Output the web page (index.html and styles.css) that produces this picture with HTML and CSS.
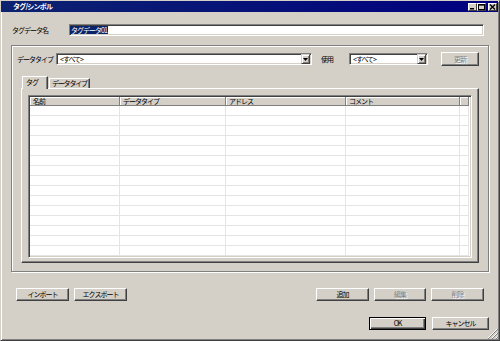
FILE: index.html
```html
<!DOCTYPE html>
<html lang="ja">
<head>
    <meta charset="UTF-8">
    <title>タグ/シンボル</title>
    <link rel="stylesheet" href="styles.css">
</head>
<body>
    <div class="window">
        <div class="titlebar">
            <span class="title">タグ/シンボル</span>
            <div class="caption-buttons">
                <span class="cap-btn">
                    <svg width="7" height="6" viewBox="0 0 7 6"><rect x="1" y="4" width="4" height="1.5" fill="#000"/></svg>
                </span>
                <span class="cap-btn">
                    <svg width="7" height="6" viewBox="0 0 7 6"><rect x="0.5" y="0.5" width="6" height="5" fill="none" stroke="#000"/><rect x="0" y="0" width="7" height="1.6" fill="#000"/></svg>
                </span>
                <span class="cap-btn close">
                    <svg width="7" height="6" viewBox="0 0 7 6"><path d="M1 0.5 L6 5.5 M6 0.5 L1 5.5" stroke="#000" stroke-width="1.4"/></svg>
                </span>
            </div>
        </div>

        <div class="content">
            <div class="name-row">
                <label class="name-label">タグデータ名</label>
                <div class="textbox"><span class="selected">タグデータ01</span></div>
            </div>

            <div class="group">
                <div class="filter-row">
                    <label class="type-label">データタイプ</label>
                    <div class="combo combo-wide">
                        <span class="combo-text">&lt;すべて&gt;</span>
                        <span class="drop"><svg width="5" height="3" viewBox="0 0 5 3"><path d="M0 0 H5 L2.5 3 Z" fill="#000"/></svg></span>
                    </div>
                    <label class="use-label">使用</label>
                    <div class="combo combo-narrow">
                        <span class="combo-text">&lt;すべて&gt;</span>
                        <span class="drop"><svg width="5" height="3" viewBox="0 0 5 3"><path d="M0 0 H5 L2.5 3 Z" fill="#000"/></svg></span>
                    </div>
                    <button class="btn btn-update" disabled>更新</button>
                </div>

                <div class="tabs">
                    <span class="tab active">タグ</span>
                    <span class="tab">データタイプ</span>
                </div>

                <div class="tab-panel">
                    <div class="listview">
                        <table>
                            <colgroup>
                                <col style="width: 90px">
                                <col style="width: 106px">
                                <col style="width: 120px">
                                <col style="width: 114px">
                                <col style="width: 9px">
                            </colgroup>
                            <thead>
                                <tr><th>名前</th><th>データタイプ</th><th>アドレス</th><th>コメント</th><th></th></tr>
                            </thead>
                            <tbody>
                                <tr><td></td><td></td><td></td><td></td><td></td></tr>
                                <tr><td></td><td></td><td></td><td></td><td></td></tr>
                                <tr><td></td><td></td><td></td><td></td><td></td></tr>
                                <tr><td></td><td></td><td></td><td></td><td></td></tr>
                                <tr><td></td><td></td><td></td><td></td><td></td></tr>
                                <tr><td></td><td></td><td></td><td></td><td></td></tr>
                                <tr><td></td><td></td><td></td><td></td><td></td></tr>
                                <tr><td></td><td></td><td></td><td></td><td></td></tr>
                                <tr><td></td><td></td><td></td><td></td><td></td></tr>
                                <tr><td></td><td></td><td></td><td></td><td></td></tr>
                                <tr><td></td><td></td><td></td><td></td><td></td></tr>
                                <tr><td></td><td></td><td></td><td></td><td></td></tr>
                                <tr><td></td><td></td><td></td><td></td><td></td></tr>
                                <tr><td></td><td></td><td></td><td></td><td></td></tr>
                                <tr><td></td><td></td><td></td><td></td><td></td></tr>
                            </tbody>
                        </table>
                    </div>
                </div>
            </div>

            <div class="action-row">
                <button class="btn">インポート</button>
                <button class="btn">エクスポート</button>
                <button class="btn btn-add">追加</button>
                <button class="btn btn-edit" disabled>編集</button>
                <button class="btn" disabled>削除</button>
            </div>

            <div class="dialog-row">
                <button class="btn btn-default">OK</button>
                <button class="btn">キャンセル</button>
            </div>
        </div>

        <svg class="grip" width="11" height="11" viewBox="0 0 11 11">
            <path d="M10 1 L1 10 M10 5 L5 10 M10 9 L9 10" stroke="#fff" stroke-width="1"/>
            <path d="M11 1 L1 11 M11 5 L5 11 M11 9 L9 11" stroke="#808080" stroke-width="1"/>
        </svg>
    </div>
</body>
</html>
```

FILE: styles.css
```css
* {
    box-sizing: border-box;
}
body {
    margin: 0;
    background: #d4d0c8;
    font-family: "Noto Sans CJK JP", "Noto Sans", sans-serif;
    font-size: 7px;
    line-height: 9px;
    letter-spacing: -1px;
    color: #000;
    white-space: nowrap;
}
.window {
    position: relative;
    width: 500px;
    height: 341px;
    background: #d4d0c8;
    border: 1px solid;
    border-color: #d4d0c8 #404040 #404040 #d4d0c8;
    box-shadow: inset 1px 1px #fff, inset -1px -1px #808080;
    display: flex;
    flex-direction: column;
}
.titlebar {
    height: 11px;
    margin-right: 1px;
    padding: 0 1px 0 12px;
    background: linear-gradient(to right, #0c2270, #000080);
    display: flex;
    align-items: center;
}
.title {
    color: #fff;
    font-weight: bold;
    letter-spacing: -0.8px;
}
.caption-buttons {
    margin-left: auto;
    display: flex;
}
.cap-btn {
    width: 9px;
    height: 8px;
    background: #d4d0c8;
    border: 1px solid;
    border-color: #fff #404040 #404040 #fff;
    display: flex;
    align-items: center;
    justify-content: center;
}
.cap-btn svg {
    display: block;
}
.cap-btn.close {
    margin-left: 2px;
}

.content {
    flex: 1;
    padding: 12px 10px 0 10px;
    display: flex;
    flex-direction: column;
}

/* sunken edit fields */
.textbox, .combo, .listview {
    background: #fff;
    border: 1px solid;
    border-color: #808080 #fff #fff #808080;
    box-shadow: inset 1px 1px #404040, inset -1px -1px #d4d0c8;
}

.name-row {
    height: 12px;
    display: flex;
    align-items: center;
}
.name-label {
    width: 58px;
    padding-left: 1px;
}
.textbox {
    flex: 1;
    height: 12px;
    margin-right: 5px;
    padding: 1px 0 1px 0;
    display: flex;
    align-items: center;
}
.selected {
    background: #0a246a;
    color: #fff;
    padding: 0 1px 0 1px;
    line-height: 8px;
}

.group {
    margin-top: 9px;
    height: 227px;
    border: 1px solid #808080;
    box-shadow: inset 1px 1px #fff, 1px 1px #fff;
    padding: 6px 9px 8px 5px;
}
.filter-row {
    height: 14px;
    display: flex;
    align-items: center;
}
.type-label {
    width: 39px;
}
.combo {
    height: 12px;
    padding: 1px;
    display: flex;
    align-items: center;
}
.combo-wide {
    width: 256px;
}
.combo-narrow {
    width: 79px;
}
.combo-text {
    flex: 1;
    padding-left: 2px;
}
.drop {
    width: 9px;
    height: 10px;
    background: #d4d0c8;
    border: 1px solid;
    border-color: #d4d0c8 #404040 #404040 #d4d0c8;
    box-shadow: inset 1px 1px #fff, inset -1px -1px #808080;
    display: flex;
    align-items: center;
    justify-content: center;
}
.drop svg {
    display: block;
}
.use-label {
    width: 28px;
    margin-left: 9px;
}

.btn {
    font: inherit;
    letter-spacing: inherit;
    color: #000;
    height: 13px;
    padding: 0;
    background: #d4d0c8;
    border: 1px solid;
    border-color: #fff #404040 #404040 #fff;
    box-shadow: inset -1px -1px #808080;
}
.btn:disabled {
    color: #808080;
    text-shadow: 1px 1px #fff;
}
.btn-update {
    width: 38px;
    height: 14px;
    margin-left: auto;
}

.tabs {
    height: 12px;
    margin: 10px 0 0 4px;
    padding-left: 1px;
    display: flex;
    align-items: flex-end;
    position: relative;
    z-index: 1;
}
.tab {
    height: 10px;
    padding-left: 2px;
    background: #d4d0c8;
    border: 1px solid;
    border-bottom: none;
    border-color: #fff #404040 #404040 #fff;
    box-shadow: inset -1px 0 #808080;
    line-height: 8px;
}
.tab.active {
    width: 26px;
    height: 13px;
    margin-bottom: -1px;
    padding-left: 3px;
    line-height: 10px;
}
.tab:not(.active) {
    width: 41px;
    margin-left: 1px;
    letter-spacing: -1.2px;
}

.tab-panel {
    height: 175px;
    margin-left: 4px;
    border: 1px solid;
    border-color: #fff #404040 #404040 #fff;
    box-shadow: inset -1px -1px #808080;
    padding: 6px 6px 4px 6px;
}
.listview {
    padding: 1px;
    overflow: hidden;
}
.listview table {
    width: 439px;
    table-layout: fixed;
    border-collapse: separate;
    border-spacing: 0;
}
.listview th {
    height: 9px;
    padding: 0 0 0 3px;
    background: #d4d0c8;
    border-right: 1px solid #808080;
    border-bottom: 1px solid #808080;
    box-shadow: inset 1px 1px #fff;
    font-weight: normal;
    text-align: left;
    line-height: 8px;
    overflow: hidden;
}
.listview td {
    height: 10px;
    padding: 0;
    border-right: 1px solid #e4e4e4;
    border-bottom: 1px solid #e4e4e4;
}

.action-row {
    margin-top: 16px;
    padding: 0 5px 0 5px;
    display: flex;
    gap: 5px;
}
.action-row .btn {
    width: 53px;
}
.action-row .btn-add {
    margin-left: auto;
}
.action-row .btn-edit {
    width: 52px;
}

.dialog-row {
    margin-top: 16px;
    display: flex;
    justify-content: flex-end;
    gap: 6px;
}
.dialog-row .btn {
    width: 57px;
}
.btn-default {
    border-color: #000;
    box-shadow: inset 1px 1px #fff, inset -1px -1px #404040, inset -2px -2px #808080;
}

.grip {
    position: absolute;
    right: 1px;
    bottom: 1px;
}
```
